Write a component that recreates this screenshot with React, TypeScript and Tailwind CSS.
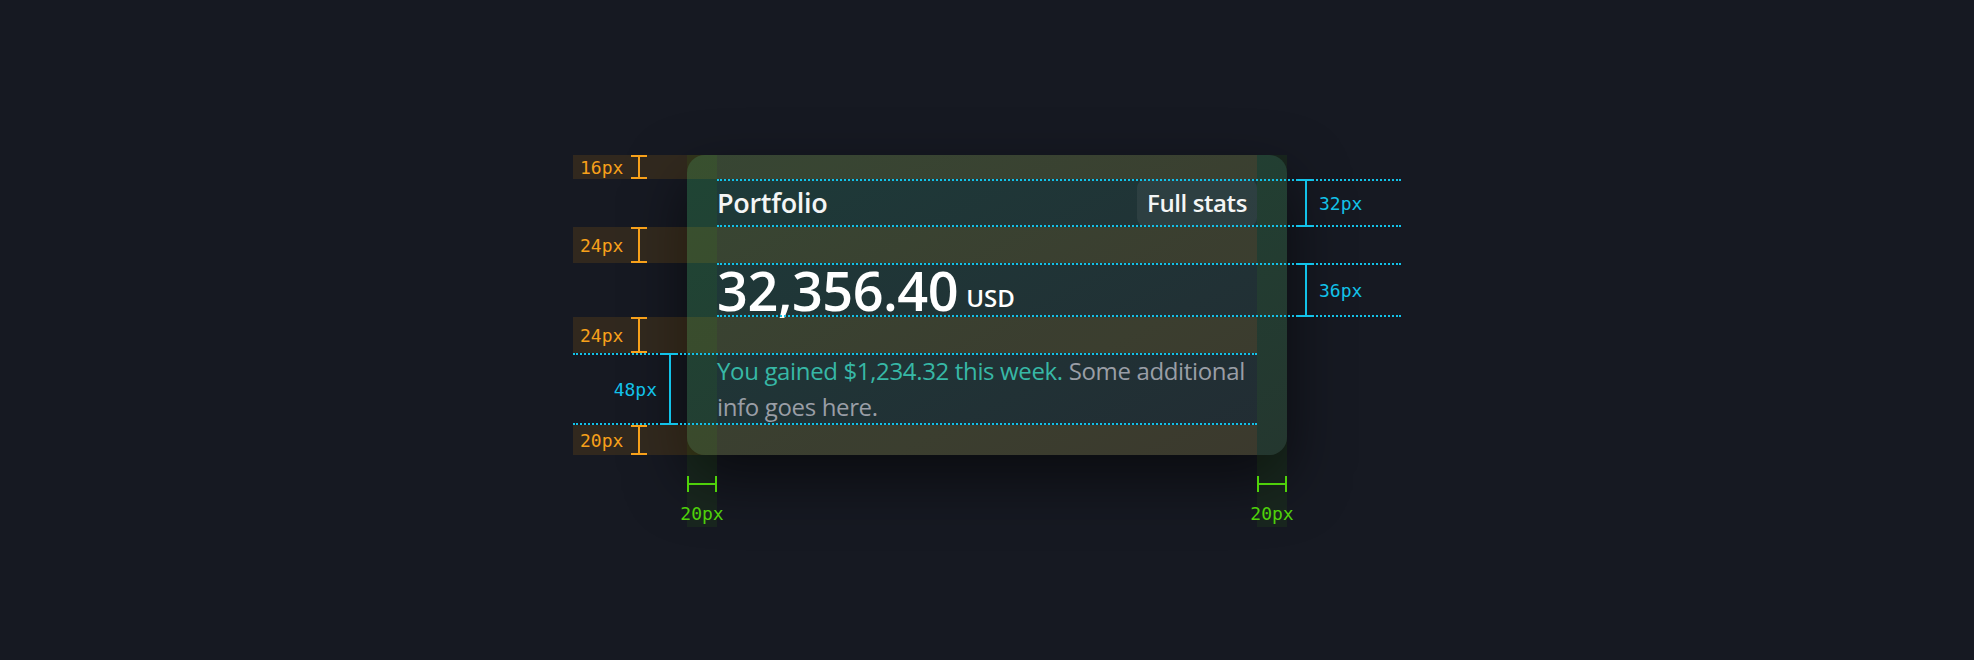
const ORANGE_ROWS = [
  { top: 0, h: 24, label: "16px" },
  { top: 72, h: 36, label: "24px" },
  { top: 162, h: 36, label: "24px" },
  { top: 270, h: 30, label: "20px" },
];

function VBar({ color, h }: { color: string; h: number }) {
  // vertical I-beam used by the spacing labels
  return (
    <div className="relative w-[16px]" style={{ height: h }}>
      <div className={`absolute left-0 top-0 h-[2px] w-[16px] ${color}`} />
      <div className={`absolute left-[7px] top-0 h-full w-[2px] ${color}`} />
      <div className={`absolute bottom-0 left-0 h-[2px] w-[16px] ${color}`} />
    </div>
  );
}

function HBar() {
  return (
    <div className="relative h-[16px] w-[30px]">
      <div className="absolute left-0 top-0 h-full w-[2px] bg-[#4fd10a]" />
      <div className="absolute left-0 top-[7px] h-[2px] w-full bg-[#4fd10a]" />
      <div className="absolute right-0 top-0 h-full w-[2px] bg-[#4fd10a]" />
    </div>
  );
}

function PortfolioCard() {
  return (
    <article className="flex w-[600px] flex-col rounded-[18px] bg-gradient-to-br from-[#1d3b39] to-[#222c33] px-[30px] pb-[30px] pt-[24px] shadow-[0_24px_60px_rgba(0,0,0,0.55)]">
      <header className="flex h-[48px] items-center justify-between">
        <h2 className="text-[27px] font-semibold tracking-[-0.3px] text-[#f4f5f5]">Portfolio</h2>
        <button className="flex h-[48px] w-[120px] items-center justify-center rounded-[9px] bg-white/[0.06] text-[24px] font-semibold tracking-[-0.4px] text-[#f4f5f5]">
          Full stats
        </button>
      </header>
      <div className="mt-[36px] flex h-[54px] items-end">
        <span className="text-[54px] font-semibold leading-[54px] tracking-[-0.5px] text-white">
          32,356.40
        </span>
        <span className="mb-[4px] ml-[8px] text-[24px] font-semibold leading-[30px] text-white">
          USD
        </span>
      </div>
      <p className="mt-[36px] text-[24px] leading-[36px] tracking-[-0.35px] text-[#9a9ea6]">
        <span className="text-[#37b8a6]">You gained $1,234.32 this week.</span> Some
        additional info goes here.
      </p>
    </article>
  );
}

function Annotations() {
  return (
    <div className="pointer-events-none absolute inset-0 font-['DejaVu_Sans_Mono',monospace] text-[18px]">
      {/* padding rows */}
      {ORANGE_ROWS.map((r, i) => (
        <div
          key={i}
          className="absolute left-[-114px] right-[30px] bg-[rgba(245,158,11,0.12)]"
          style={{ top: r.top, height: r.h }}
        >
          <span className="absolute left-[7px] top-1/2 -translate-y-1/2 text-[#f7a01a]">
            {r.label}
          </span>
          <div className="absolute left-[58px] top-0 h-full">
            <VBar color="bg-[#f7a01a]" h={r.h} />
          </div>
        </div>
      ))}

      {/* padding columns */}
      <div className="absolute left-0 top-0 h-[372px] w-[30px] bg-[rgba(76,217,0,0.07)]" />
      <div className="absolute right-0 top-0 h-[372px] w-[30px] bg-[rgba(76,217,0,0.07)]" />
      {[0, 570].map((x) => (
        <div key={x} className="absolute top-[321px] flex w-[30px] flex-col items-center" style={{ left: x }}>
          <HBar />
          <span className="mt-[8px] text-[#4fd10a]">20px</span>
        </div>
      ))}

      {/* content boxes */}
      <div className="absolute left-[30px] top-[24px] w-[684px] border-t-2 border-dotted border-[#12c2e9]" />
      <div className="absolute left-[30px] top-[70px] w-[684px] border-t-2 border-dotted border-[#12c2e9]" />
      <div className="absolute left-[30px] top-[108px] w-[684px] border-t-2 border-dotted border-[#12c2e9]" />
      <div className="absolute left-[30px] top-[160px] w-[684px] border-t-2 border-dotted border-[#12c2e9]" />
      <div className="absolute left-[-114px] top-[198px] w-[684px] border-t-2 border-dotted border-[#12c2e9]" />
      <div className="absolute left-[-114px] top-[268px] w-[684px] border-t-2 border-dotted border-[#12c2e9]" />

      <div className="absolute left-[611px] top-[24px] flex items-center gap-[5px] text-[#12c2e9]">
        <VBar color="bg-[#12c2e9]" h={48} />
        <span>32px</span>
      </div>
      <div className="absolute left-[611px] top-[108px] flex items-center gap-[5px] text-[#12c2e9]">
        <VBar color="bg-[#12c2e9]" h={54} />
        <span>36px</span>
      </div>
      <div className="absolute right-[609px] top-[198px] flex items-center gap-[5px] text-[#12c2e9]">
        <span>48px</span>
        <VBar color="bg-[#12c2e9]" h={72} />
      </div>
    </div>
  );
}

export default function App() {
  return (
    <div className="flex h-[660px] w-full justify-center bg-[#161922] pt-[155px] font-['Open_Sans',sans-serif]">
      <div className="relative h-fit">
        <PortfolioCard />
        <Annotations />
      </div>
    </div>
  );
}
